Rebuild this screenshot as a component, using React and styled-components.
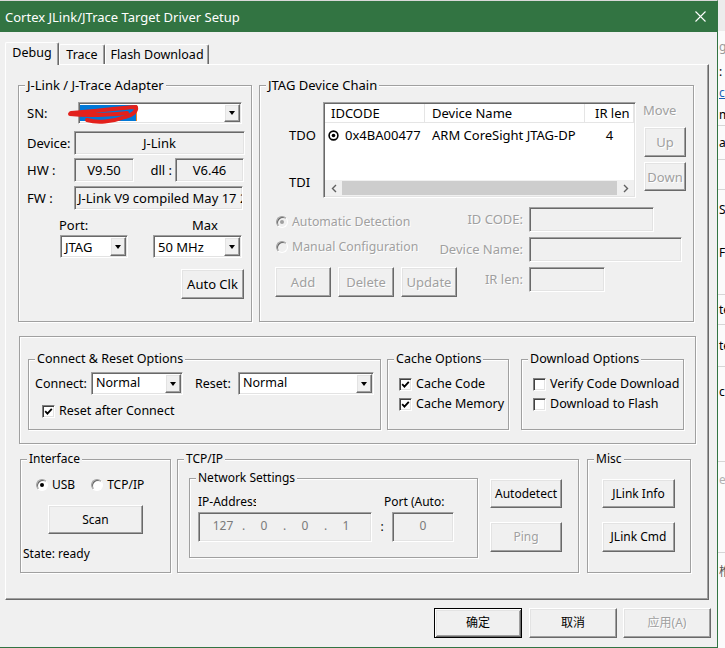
import styled, { createGlobalStyle, css } from 'styled-components'

const GREEN = '#327442'

const GlobalStyle = createGlobalStyle`
  * { box-sizing: border-box; }
  html, body { margin: 0; padding: 0; }
  body {
    background: #f0f0f0;
    font-family: "Noto Sans", "Noto Sans CJK SC", sans-serif;
    font-size: 12px;
    line-height: 14px;
    color: #000;
  }
`

const raised = css`
  border: 1px solid;
  border-color: #fff #696969 #696969 #fff;
  box-shadow: inset -1px -1px 0 #a0a0a0, inset 1px 1px 0 #e3e3e3;
`
const sunken = css`
  border: 1px solid;
  border-color: #a0a0a0 #fff #fff #a0a0a0;
  box-shadow: inset 1px 1px 0 #696969, inset -1px -1px 0 #e3e3e3;
`
const dimText = css`
  color: #a0a0a0;
  text-shadow: 1px 1px 0 #fff;
`

const Screen = styled.div`
  display: flex;
  width: 725px;
  height: 648px;
  overflow: hidden;
`

const Window = styled.div`
  width: 718px;
  height: 648px;
  flex: none;
  display: flex;
  flex-direction: column;
  background: #f0f0f0;
  border-top: 1px solid #d9d9d9;
  border-right: 1px solid ${GREEN};
  border-bottom: 1px solid ${GREEN};
`

const TitleBar = styled.div`
  height: 31px;
  flex: none;
  display: flex;
  align-items: center;
  justify-content: space-between;
  padding: 0 11px 0 5px;
  background: ${GREEN};
  color: #fff;
  font-size: 13px;
`

const Body = styled.div`
  flex: 1;
  display: flex;
  flex-direction: column;
  padding: 10px 0 0 5px;
`

const TabStrip = styled.div`
  height: 22px;
  display: flex;
  align-items: flex-end;
  position: relative;
  z-index: 1;
`

const Tab = styled.div`
  width: ${p => p.$w}px;
  height: ${p => (p.$active ? 23 : 20)}px;
  margin-bottom: ${p => (p.$active ? -1 : 0)}px;
  display: flex;
  align-items: center;
  justify-content: center;
  padding-bottom: ${p => (p.$active ? 2 : 0)}px;
  background: #f0f0f0;
  border-top: 1px solid #fff;
  border-left: 1px solid #fff;
  border-right: 1px solid #696969;
  border-radius: 2px 2px 0 0;
  box-shadow: inset -1px 0 0 #a0a0a0;
  font-size: 12.5px;
`

const Panel = styled.div`
  width: 704px;
  height: 536px;
  display: flex;
  flex-direction: column;
  padding: 13px 0 0 12px;
  border-top: 1px solid #fff;
  border-left: 1px solid #fff;
  border-right: 1px solid #696969;
  border-bottom: 1px solid #696969;
  box-shadow: inset -1px -1px 0 #a0a0a0;
`

const TopRow = styled.div`
  display: flex;
  gap: 7px;
  font-size: 13px;
`

const GroupBox = styled.fieldset`
  width: ${p => p.$w}px;
  height: ${p => p.$h}px;
  flex: none;
  margin: 0;
  padding: 0;
  min-width: 0;
  border: 1px solid #a0a0a0;
  box-shadow: inset 1px 1px 0 #fff, 1px 1px 0 #fff;
`

const Legend = styled.legend`
  margin-left: 6px;
  padding: 0 2px;
  line-height: 14px;
  background: #f0f0f0;
`

/* ---------- J-Link adapter ---------- */

const AdapterBody = styled.div`
  display: flex;
  flex-direction: column;
  padding: 10px 0 0 8px;
`

const FieldRow = styled.div`
  display: flex;
  align-items: center;
  margin-top: ${p => p.$mt || 0}px;
  padding-left: ${p => p.$pl || 0}px;
`

const Label = styled.span`
  width: ${p => p.$w}px;
  flex: none;
  white-space: nowrap;
  text-align: ${p => (p.$right ? 'right' : 'left')};
  padding-right: ${p => (p.$right ? 3 : 0)}px;
  margin-left: ${p => p.$ml || 0}px;
`

const Field = styled.div`
  width: ${p => p.$w}px;
  height: ${p => p.$h || 24}px;
  flex: none;
  display: flex;
  align-items: center;
  justify-content: ${p => (p.$center ? 'center' : 'flex-start')};
  padding: 0 3px;
  overflow: hidden;
  white-space: nowrap;
  background: #f0f0f0;
  ${sunken}
`

const Combo = styled.div`
  position: relative;
  width: ${p => p.$w}px;
  height: ${p => p.$h || 23}px;
  flex: none;
  margin-left: ${p => p.$ml || 0}px;
  display: flex;
  align-items: stretch;
  padding: 1px;
  background: #fff;
  ${sunken}
`

const ComboText = styled.span`
  flex: 1;
  display: flex;
  align-items: ${p => (p.$top ? 'flex-start' : 'center')};
  padding: ${p => (p.$top ? '2px 0 0 3px' : '0 0 0 3px')};
  overflow: hidden;
  white-space: nowrap;
`

const Selection = styled.span`
  width: 57px;
  height: 16px;
  margin-left: -3px;
  background: #0078d7;
  border-right: 1px solid #f08a24;
`

const DropButton = styled.span`
  width: 16px;
  flex: none;
  display: flex;
  align-items: center;
  justify-content: center;
  background: #f0f0f0;
  ${raised}
  &::after {
    content: '';
    border-left: 3.5px solid transparent;
    border-right: 3.5px solid transparent;
    border-top: 4px solid #000;
  }
`

const Scribble = styled.svg`
  position: absolute;
  left: -12px;
  top: 0;
  pointer-events: none;
`

const PortLabels = styled.div`
  display: flex;
  margin-top: 8px;
  padding-left: 32px;
`

const Button = styled.button`
  width: ${p => p.$w}px;
  height: ${p => p.$h || 30}px;
  flex: none;
  margin: 0;
  margin-left: ${p => p.$ml || 0}px;
  margin-top: ${p => p.$mt || 0}px;
  padding: 0;
  display: flex;
  align-items: center;
  justify-content: center;
  font: inherit;
  color: #000;
  background: #f0f0f0;
  ${raised}
  ${p => p.$disabled && dimText}
  ${p =>
    p.$default &&
    css`
      border: 1px solid #000;
      box-shadow: inset 1px 1px 0 #fff, inset -1px -1px 0 #696969,
        inset 2px 2px 0 #e3e3e3, inset -2px -2px 0 #a0a0a0;
    `}
`

/* ---------- JTAG chain ---------- */

const ChainBody = styled.div`
  display: flex;
  flex-direction: column;
  padding-top: 10px;
`

const ChainTop = styled.div`
  display: flex;
  align-items: flex-start;
`

const PinLabels = styled.div`
  width: 63px;
  flex: none;
  display: flex;
  flex-direction: column;
  padding: 26px 0 0 29px;
  gap: 33px;
`

const DeviceList = styled.div`
  width: 313px;
  height: 96px;
  flex: none;
  display: flex;
  flex-direction: column;
  background: #fff;
  padding: 1px;
  ${sunken}
`

const ListHeader = styled.div`
  height: 19px;
  display: flex;
  border-bottom: 1px solid #e5e5e5;
`

const HeaderCell = styled.div`
  width: ${p => (p.$w ? `${p.$w}px` : 'auto')};
  flex: ${p => (p.$w ? 'none' : 1)};
  display: flex;
  align-items: center;
  padding-left: ${p => p.$pl}px;
  border-right: 1px solid #e5e5e5;
  white-space: nowrap;
`

const ListRow = styled.div`
  height: 24px;
  display: flex;
  align-items: center;
`

const Cell = styled.div`
  width: ${p => (p.$w ? `${p.$w}px` : 'auto')};
  flex: ${p => (p.$w ? 'none' : 1)};
  display: flex;
  align-items: center;
  gap: 6px;
  justify-content: ${p => (p.$center ? 'center' : 'flex-start')};
  padding-left: ${p => p.$pl || 0}px;
  white-space: nowrap;
`

const ListSpacer = styled.div`
  flex: 1;
`

const HScroll = styled.div`
  height: 16px;
  display: flex;
  background: #f0f0f0;
`

const ScrollArrow = styled.div`
  width: 17px;
  flex: none;
  display: flex;
  align-items: center;
  justify-content: center;
`

const ScrollThumb = styled.div`
  flex: 1;
  margin: 1px 0;
  background: #cdcdcd;
`

const MoveColumn = styled.div`
  width: 42px;
  flex: none;
  margin-left: 8px;
  display: flex;
  flex-direction: column;
`

const DimLabel = styled.span`
  ${dimText}
  white-space: nowrap;
`

const MoveLabel = styled(DimLabel)`
  margin: 1px 0 0 -1px;
`

const ChainConfig = styled.div`
  display: flex;
  flex-direction: column;
  gap: 5px;
  margin-top: 9px;
`

const ConfigRow = styled.div`
  display: flex;
  align-items: flex-start;
`

const ConfigLead = styled.div`
  width: 269px;
  flex: none;
  display: flex;
  align-items: flex-start;
  & > label {
    font-size: 12.3px;
  }
`

const ConfigLabel = styled(DimLabel)`
  flex: 1;
  display: flex;
  justify-content: flex-end;
  padding-right: 6px;
  line-height: 25px;
`

const Option = styled.label`
  display: flex;
  align-items: center;
  gap: 4px;
  height: 14px;
  margin-top: ${p => p.$mt || 0}px;
  padding-left: ${p => p.$pl || 0}px;
  white-space: nowrap;
  ${p => p.$disabled && dimText}
`

const RadioDot = styled.span`
  width: 12px;
  height: 12px;
  flex: none;
  border-radius: 50%;
  border: 1px solid;
  border-color: #a0a0a0 #fff #fff #a0a0a0;
  box-shadow: inset 1px 1px 0 #696969;
  background: ${p => (p.$disabled ? '#f0f0f0' : '#fff')};
  display: flex;
  align-items: center;
  justify-content: center;
  &::after {
    content: '';
    width: 4px;
    height: 4px;
    border-radius: 50%;
    background: ${p => (p.$disabled ? '#a0a0a0' : '#000')};
    display: ${p => (p.$on ? 'block' : 'none')};
  }
`

const CheckBox = styled.span`
  width: 13px;
  height: 13px;
  flex: none;
  display: flex;
  align-items: center;
  justify-content: center;
  background: #fff;
  border: 1px solid;
  border-color: #808080 #fff #fff #808080;
  box-shadow: inset 1px 1px 0 #404040, inset -1px -1px 0 #e3e3e3;
`

const ButtonGroup = styled.div`
  display: flex;
  gap: 7px;
  margin-left: 15px;
`

/* ---------- Options frame ---------- */

const OptionsFrame = styled.div`
  width: 677px;
  height: 108px;
  margin: 14px 0 0 1px;
  display: flex;
  align-items: flex-start;
  padding: 15px 0 0 8px;
  font-size: 12.5px;
  border: 1px solid #a0a0a0;
  box-shadow: inset 1px 1px 0 #fff, 1px 1px 0 #fff;
`

const ConnectBody = styled.div`
  display: flex;
  flex-direction: column;
`

const CheckList = styled.div`
  width: ${p => p.$w}px;
  display: flex;
  flex-direction: column;
  gap: 6px;
  padding: 11px 0 0 11px;
  overflow: hidden;
`

/* ---------- Bottom groups ---------- */

const BottomGroups = styled.div`
  display: flex;
  align-items: flex-start;
  margin: 8px 0 0 2px;
`

const InterfaceBody = styled.div`
  display: flex;
  flex-direction: column;
`

const RadioRow = styled.div`
  display: flex;
  gap: 16px;
  margin-top: 12px;
  padding-left: 15px;
`

const StateText = styled.div`
  margin-top: 13px;
  padding-left: 2px;
`

const TcpBody = styled.div`
  display: flex;
  align-items: flex-start;
`

const NetBody = styled.div`
  display: flex;
  flex-direction: column;
  padding: 10px 0 0 8px;
`

const NetLabels = styled.div`
  display: flex;
`

const ClipLabel = styled.span`
  width: ${p => p.$w}px;
  flex: none;
  overflow: hidden;
  white-space: nowrap;
  margin-left: ${p => p.$ml || 0}px;
`

const NetInputs = styled.div`
  display: flex;
  align-items: center;
  margin-top: 3px;
`

const IpField = styled(Field)`
  align-items: flex-start;
  justify-content: ${p => (p.$center ? 'center' : 'flex-start')};
  padding: 6px 0 0 ${p => (p.$center ? 0 : 9)}px;
  color: #7a7a7a;
`

const Octet = styled.span`
  width: 30px;
  text-align: center;
`

const Dot = styled.span`
  width: 11px;
  text-align: center;
`

const Colon = styled.span`
  width: 20px;
  text-align: center;
`

const ActionColumn = styled.div`
  display: flex;
  flex-direction: column;
  gap: 14px;
  padding: ${p => p.$pt}px 0 0 ${p => p.$pl}px;
`

/* ---------- Dialog buttons ---------- */

const DialogButtons = styled.div`
  display: flex;
  justify-content: flex-end;
  padding: 8px 6px 0 0;
`

/* ---------- Background window edge ---------- */

const SideStrip = styled.div`
  flex: 1;
  display: flex;
  flex-direction: column;
  background: #fbfbfb;
  overflow: hidden;
`

const StripItem = styled.div`
  height: ${p => (p.$h ? `${p.$h}px` : 'auto')};
  flex: ${p => (p.$h ? 'none' : 1)};
  display: flex;
  align-items: center;
  padding-left: 1px;
  white-space: nowrap;
  color: ${p => p.$color || '#000'};
  text-decoration: ${p => (p.$link ? 'underline' : 'none')};
  background: ${p => p.$bg || 'transparent'};
  border-bottom: ${p => (p.$line ? '1px solid #d6d6d6' : 'none')};
`

const stripItems = [
  { h: 31, bg: '#ececec' },
  { h: 31, t: 'g', color: '#9a9a9a' },
  { h: 20, t: ':' },
  { h: 22, t: 'ch', color: '#1a5fb4', link: true },
  { h: 22, t: 'm', line: true },
  { h: 34, t: 'ar', line: true },
  { h: 30, line: true },
  { h: 40, t: 'S' },
  { h: 45, t: 'F' },
  { h: 20, line: true },
  { h: 30, t: 'te', line: true },
  { h: 42, t: 'te', line: true },
  { h: 50, t: 'cu' },
  { h: 45, line: true },
  { h: 36, t: 'e', color: '#b0b0b0' },
  { h: 55, line: true },
  { h: 38, t: '栣', color: '#555' },
  {},
]

const Close = () => (
  <svg width="11" height="11" viewBox="0 0 11 11">
    <path d="M0.5 0.5L10.5 10.5M10.5 0.5L0.5 10.5" stroke="#fff" strokeWidth="1.1" />
  </svg>
)

const Check = () => (
  <svg width="9" height="9" viewBox="0 0 9 9">
    <polyline points="1.2,4.2 3.4,6.6 7.8,1.8" fill="none" stroke="#000" strokeWidth="1.8" />
  </svg>
)

const TargetIcon = () => (
  <svg width="11" height="11" viewBox="0 0 11 11">
    <circle cx="5.5" cy="5.5" r="4.4" fill="none" stroke="#000" strokeWidth="1.6" />
    <circle cx="5.5" cy="5.5" r="1.8" fill="#000" />
  </svg>
)

const Chevron = ({ dir }) => (
  <svg width="6" height="9" viewBox="0 0 6 9">
    <polyline
      points={dir === 'left' ? '5,1 1.5,4.5 5,8' : '1,1 4.5,4.5 1,8'}
      fill="none"
      stroke="#606060"
      strokeWidth="1.4"
    />
  </svg>
)

const ComboBox = ({ w, h, ml, children, top }) => (
  <Combo $w={w} $h={h} $ml={ml}>
    <ComboText $top={top}>{children}</ComboText>
    <DropButton />
  </Combo>
)

const CheckOption = ({ checked, children, pl, mt }) => (
  <Option $pl={pl} $mt={mt}>
    <CheckBox>{checked && <Check />}</CheckBox>
    {children}
  </Option>
)

const RadioOption = ({ on, disabled, children, pl, mt }) => (
  <Option $pl={pl} $mt={mt} $disabled={disabled}>
    <RadioDot $on={on} $disabled={disabled} />
    {children}
  </Option>
)

export default function App() {
  return (
    <>
      <GlobalStyle />
      <Screen>
        <Window>
          <TitleBar>
            <span>Cortex JLink/JTrace Target Driver Setup</span>
            <Close />
          </TitleBar>

          <Body>
            <TabStrip>
              <Tab $w={54} $active>Debug</Tab>
              <Tab $w={46}>Trace</Tab>
              <Tab $w={104}>Flash Download</Tab>
            </TabStrip>

            <Panel>
              <TopRow>
                <GroupBox $w={234} $h={244}>
                  <Legend>J-Link / J-Trace Adapter</Legend>
                  <AdapterBody>
                    <FieldRow>
                      <Label $w={51}>SN:</Label>
                      <Combo $w={164} $h={22}>
                        <ComboText>
                          <Selection />
                        </ComboText>
                        <DropButton />
                        <Scribble width="76" height="22" viewBox="0 0 76 22">
                          <path
                            d="M4 10 C25 9 50 5 69 4 C70 8 66 12 58 14 C45 19 30 20 20 17"
                            fill="none"
                            stroke="#e3211c"
                            strokeWidth="4"
                            strokeLinecap="round"
                            strokeLinejoin="round"
                          />
                          <path
                            d="M3 11 C20 13 40 12 60 10"
                            fill="none"
                            stroke="#e3211c"
                            strokeWidth="4"
                            strokeLinecap="round"
                          />
                        </Scribble>
                      </Combo>
                    </FieldRow>
                    <FieldRow $mt={7}>
                      <Label $w={47}>Device:</Label>
                      <Field $w={171} $center>J-Link</Field>
                    </FieldRow>
                    <FieldRow $mt={3}>
                      <Label $w={47}>HW :</Label>
                      <Field $w={60} $center>V9.50</Field>
                      <Label $w={41} $right>dll :</Label>
                      <Field $w={69} $center>V6.46</Field>
                    </FieldRow>
                    <FieldRow $mt={4}>
                      <Label $w={47}>FW :</Label>
                      <Field $w={169}>J-Link V9 compiled May 17 2017 10:32:51</Field>
                    </FieldRow>
                    <PortLabels>
                      <Label $w={133}>Port:</Label>
                      <Label $w={40}>Max</Label>
                    </PortLabels>
                    <FieldRow $mt={3}>
                      <ComboBox w={68} ml={33}>JTAG</ComboBox>
                      <ComboBox w={89} ml={25}>50 MHz</ComboBox>
                    </FieldRow>
                    <FieldRow $mt={11}>
                      <Button $w={63} $ml={154}>Auto Clk</Button>
                    </FieldRow>
                  </AdapterBody>
                </GroupBox>

                <GroupBox $w={435} $h={244}>
                  <Legend>JTAG Device Chain</Legend>
                  <ChainBody>
                    <ChainTop>
                      <PinLabels>
                        <span>TDO</span>
                        <span>TDI</span>
                      </PinLabels>
                      <DeviceList>
                        <ListHeader>
                          <HeaderCell $w={100} $pl={6}>IDCODE</HeaderCell>
                          <HeaderCell $w={160} $pl={7}>Device Name</HeaderCell>
                          <HeaderCell $pl={10}>IR len</HeaderCell>
                        </ListHeader>
                        <ListRow>
                          <Cell $w={100} $pl={3}>
                            <TargetIcon />
                            0x4BA00477
                          </Cell>
                          <Cell $w={160} $pl={7}>ARM CoreSight JTAG-DP</Cell>
                          <Cell $center>4</Cell>
                        </ListRow>
                        <ListSpacer />
                        <HScroll>
                          <ScrollArrow>
                            <Chevron dir="left" />
                          </ScrollArrow>
                          <ScrollThumb />
                          <ScrollArrow>
                            <Chevron dir="right" />
                          </ScrollArrow>
                        </HScroll>
                      </DeviceList>
                      <MoveColumn>
                        <MoveLabel>Move</MoveLabel>
                        <Button $w={42} $mt={10} $disabled>Up</Button>
                        <Button $w={42} $h={29} $mt={5} $disabled>Down</Button>
                      </MoveColumn>
                    </ChainTop>

                    <ChainConfig>
                      <ConfigRow>
                        <ConfigLead>
                          <RadioOption on disabled pl={16} mt={8}>Automatic Detection</RadioOption>
                          <ConfigLabel>ID CODE:</ConfigLabel>
                        </ConfigLead>
                        <Field $w={125} $h={25} />
                      </ConfigRow>
                      <ConfigRow>
                        <ConfigLead>
                          <RadioOption disabled pl={16} mt={3}>Manual Configuration</RadioOption>
                          <ConfigLabel>Device Name:</ConfigLabel>
                        </ConfigLead>
                        <Field $w={153} $h={25} />
                      </ConfigRow>
                      <ConfigRow>
                        <ConfigLead>
                          <ButtonGroup>
                            <Button $w={56} $disabled>Add</Button>
                            <Button $w={56} $disabled>Delete</Button>
                            <Button $w={56} $disabled>Update</Button>
                          </ButtonGroup>
                          <ConfigLabel>IR len:</ConfigLabel>
                        </ConfigLead>
                        <Field $w={76} $h={25} />
                      </ConfigRow>
                    </ChainConfig>
                  </ChainBody>
                </GroupBox>
              </TopRow>

              <OptionsFrame>
                <GroupBox $w={353} $h={78}>
                  <Legend>Connect &amp; Reset Options</Legend>
                  <ConnectBody>
                    <FieldRow $mt={6} $pl={6}>
                      <Label $w={56}>Connect:</Label>
                      <ComboBox w={92} top>Normal</ComboBox>
                      <Label $w={43} $ml={12}>Reset:</Label>
                      <ComboBox w={136} top>Normal</ComboBox>
                    </FieldRow>
                    <CheckOption checked pl={13} mt={9}>Reset after Connect</CheckOption>
                  </ConnectBody>
                </GroupBox>

                <GroupBox $w={122} $h={78} style={{ marginLeft: 6 }}>
                  <Legend>Cache Options</Legend>
                  <CheckList $w={120}>
                    <CheckOption checked>Cache Code</CheckOption>
                    <CheckOption checked>Cache Memory</CheckOption>
                  </CheckList>
                </GroupBox>

                <GroupBox $w={163} $h={78} style={{ marginLeft: 12 }}>
                  <Legend>Download Options</Legend>
                  <CheckList $w={158}>
                    <CheckOption>Verify Code Download</CheckOption>
                    <CheckOption>Download to Flash</CheckOption>
                  </CheckList>
                </GroupBox>
              </OptionsFrame>

              <BottomGroups>
                <GroupBox $w={151} $h={121}>
                  <Legend>Interface</Legend>
                  <InterfaceBody>
                    <RadioRow>
                      <RadioOption on>USB</RadioOption>
                      <RadioOption>TCP/IP</RadioOption>
                    </RadioRow>
                    <Button $w={95} $h={29} $mt={13} $ml={27}>Scan</Button>
                    <StateText>State: ready</StateText>
                  </InterfaceBody>
                </GroupBox>

                <GroupBox $w={402} $h={121} style={{ marginLeft: 6 }}>
                  <Legend>TCP/IP</Legend>
                  <TcpBody>
                    <GroupBox $w={289} $h={87} style={{ margin: '5px 0 0 11px' }}>
                      <Legend>Network Settings</Legend>
                      <NetBody>
                        <NetLabels>
                          <ClipLabel $w={58}>IP-Address:</ClipLabel>
                          <ClipLabel $w={64} $ml={128}>Port (Auto:</ClipLabel>
                        </NetLabels>
                        <NetInputs>
                          <IpField $w={174} $h={30}>
                            <Octet>127</Octet>
                            <Dot>.</Dot>
                            <Octet>0</Octet>
                            <Dot>.</Dot>
                            <Octet>0</Octet>
                            <Dot>.</Dot>
                            <Octet>1</Octet>
                          </IpField>
                          <Colon>:</Colon>
                          <IpField $w={62} $h={30} $center>0</IpField>
                        </NetInputs>
                      </NetBody>
                    </GroupBox>
                    <ActionColumn $pt={13} $pl={12}>
                      <Button $w={72} $h={29}>Autodetect</Button>
                      <Button $w={72} $disabled>Ping</Button>
                    </ActionColumn>
                  </TcpBody>
                </GroupBox>

                <GroupBox $w={104} $h={121} style={{ marginLeft: 8 }}>
                  <Legend>Misc</Legend>
                  <ActionColumn $pt={13} $pl={14}>
                    <Button $w={73} $h={29}>JLink Info</Button>
                    <Button $w={73}>JLink Cmd</Button>
                  </ActionColumn>
                </GroupBox>
              </BottomGroups>
            </Panel>

            <DialogButtons>
              <Button $w={88} $default>确定</Button>
              <Button $w={88} $ml={7}>取消</Button>
              <Button $w={88} $ml={6} $disabled>应用(A)</Button>
            </DialogButtons>
          </Body>
        </Window>

        <SideStrip>
          {stripItems.map((s, i) => (
            <StripItem key={i} $h={s.h} $color={s.color} $link={s.link} $bg={s.bg} $line={s.line}>
              {s.t}
            </StripItem>
          ))}
        </SideStrip>
      </Screen>
    </>
  )
}
